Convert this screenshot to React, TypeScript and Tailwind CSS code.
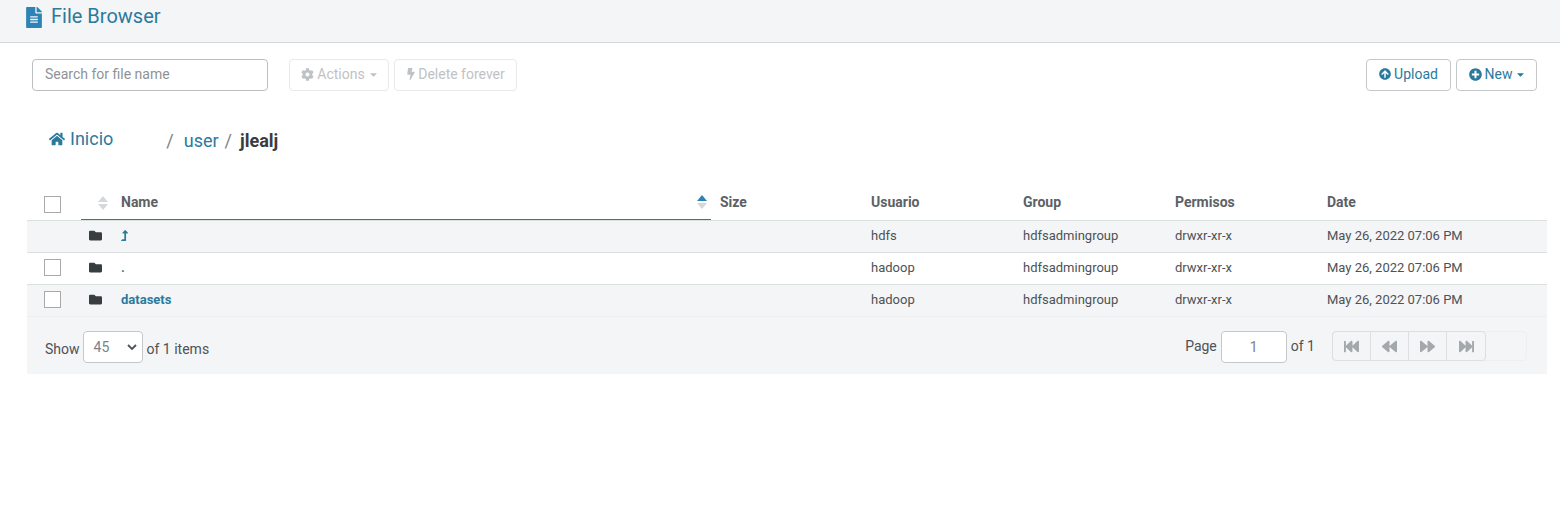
import { FaArrowCircleUp, FaBackward, FaBolt, FaCaretDown, FaCog, FaFastBackward, FaFastForward, FaFileAlt, FaFolder, FaForward, FaHome, FaLevelUpAlt, FaPlusCircle } from 'react-icons/fa';

const rows = [
  { name: 'up', user: 'hdfs', alt: true, check: false },
  { name: '.', user: 'hadoop', alt: false, check: true },
  { name: 'datasets', user: 'hadoop', alt: true, check: true },
];

function Checkbox() {
  return <div className="w-[17px] h-[17px] border border-[#a9a9a9] bg-white" />;
}

function SortIcon({ up, down, className }: { up: string; down: string; className: string }) {
  return (
    <svg width="10" height="14" viewBox="0 0 10 14" className={className}>
      <path d="M5 0L10 6H0Z" fill={up} />
      <path d="M0 8H10L5 14Z" fill={down} />
    </svg>
  );
}

function PagerButton({ children, last }: { children: React.ReactNode; last?: boolean }) {
  return (
    <div className={`w-[38px] h-full flex items-center justify-center text-[#a3a8ab] text-[15px] ${last ? '' : 'border-r border-[#dcdfe0]'}`}>
      {children}
    </div>
  );
}

export default function App() {
  return (
    <div className="w-[1560px] h-[519px] bg-white overflow-hidden text-[14px] text-[#4d5256]" style={{ fontFamily: 'Roboto, sans-serif' }}>
      {/* Header */}
      <div className="h-[43px] bg-[#f4f5f6] border-b border-[#d6d8da] pl-[26px] flex items-start">
        <FaFileAlt className="text-[#2d83b5] w-[16px] h-[21px] mt-[7px]" />
        <span className="ml-[9px] mt-[3px] text-[20px] leading-[26px] text-[#2a7a9e]">File Browser</span>
      </div>

      {/* Toolbar */}
      <div className="mt-[16px] h-[32px] pl-[32px] pr-[23px] flex items-center">
        <div className="w-[236px] h-[32px] border border-[#bcbfc1] rounded-[4px] pl-[12px] pb-[2px] flex items-center text-[14px] text-[#8f9396]">
          Search for file name
        </div>
        <div className="ml-[21px] w-[100px] h-[32px] border border-[#e8e9ea] rounded-[4px] pb-[2px] flex items-center justify-center gap-[3px] text-[#bfc2c4] text-[14px]">
          <FaCog className="text-[13px]" />
          <span>Actions</span>
          <FaCaretDown className="text-[11px] -mr-[2px]" />
        </div>
        <div className="ml-[5px] w-[123px] h-[32px] border border-[#e8e9ea] rounded-[4px] pb-[2px] flex items-center justify-center gap-[2px] text-[#bfc2c4] text-[14px]">
          <FaBolt className="text-[12px] -ml-[1px]" />
          <span className="-ml-[1px]">Delete forever</span>
        </div>
        <div className="ml-auto w-[85px] h-[32px] border border-[#c5c8ca] rounded-[4px] pb-[2px] flex items-center justify-center gap-[3px] text-[#2a7a9e] text-[14px]">
          <FaArrowCircleUp className="text-[12px]" />
          <span>Upload</span>
        </div>
        <div className="ml-[5px] w-[81px] h-[32px] border border-[#c5c8ca] rounded-[4px] pb-[2px] flex items-center justify-center gap-[3px] text-[#2a7a9e] text-[14px]">
          <FaPlusCircle className="text-[13px]" />
          <span>New</span>
          <FaCaretDown className="text-[11px] -mr-[2px]" />
        </div>
      </div>

      {/* Breadcrumbs */}
      <div className="mt-[36px] h-[29px] pl-[49px] flex items-start text-[18px] leading-[24px]">
        <div className="flex items-center gap-[5px] text-[#2a7a9e]">
          <FaHome className="text-[16px]" />
          <span>Inicio</span>
        </div>
        <div className="mt-[2px] ml-[53px] flex items-center">
          <span className="text-[#7c8286]">/</span>
          <span className="ml-[10px] text-[#2a7a9e]">user</span>
          <span className="ml-[6px] text-[#7c8286]">/</span>
          <span className="ml-[8px] font-bold text-[#383d40]">jlealj</span>
        </div>
      </div>

      {/* Table */}
      <div className="mt-[30px] mx-[27px] w-[1520px]">
        <div className="h-[35px] flex border-b border-[#dcdfe0] font-bold text-[#5c6165]">
          <div className="w-[54px] pl-[17px] pt-[10px]"><Checkbox /></div>
          <div className="w-[630px] h-[34px] flex relative">
            <div className="w-[32px] relative">
              <SortIcon up="#d5d8da" down="#d5d8da" className="absolute left-[17px] top-[10px]" />
            </div>
            <span className="pl-[8px] pt-[6px]">Name</span>
            <SortIcon up="#2d83b5" down="#d5d8da" className="absolute left-[616px] top-[9px]" />
            <div className="absolute left-0 right-0 bottom-0 h-px bg-[#1f7fb0]" />
          </div>
          <div className="w-[152px] pl-[9px] pt-[6px]">Size</div>
          <div className="w-[152px] pl-[8px] pt-[6px]">Usuario</div>
          <div className="w-[152px] pl-[8px] pt-[6px]">Group</div>
          <div className="w-[152px] pl-[8px] pt-[6px]">Permisos</div>
          <div className="flex-1 pl-[8px] pt-[6px]">Date</div>
        </div>
        {rows.map((row, i) => (
          <div key={row.name} className={`h-[32px] pb-[2px] flex items-center border-b text-[13px] ${i === 2 ? 'border-[#eceeef]' : 'border-[#dcdfe0]'} ${row.alt ? 'bg-[#f4f5f6]' : 'bg-white'}`}>
            <div className="w-[54px] pl-[17px]">{row.check && <Checkbox />}</div>
            <div className="w-[32px] pl-[8px] text-[#383d40] text-[13px]"><FaFolder /></div>
            <div className="w-[598px] pl-[8px] text-[#2a7a9e] font-bold">
              {row.name === 'up' ? <FaLevelUpAlt className="text-[11px] -ml-[2px]" /> : row.name}
            </div>
            <div className="w-[152px]" />
            <div className="w-[152px] pl-[8px]">{row.user}</div>
            <div className="w-[152px] pl-[8px]">hdfsadmingroup</div>
            <div className="w-[152px] pl-[8px]">drwxr-xr-x</div>
            <div className="flex-1 pl-[8px]">May 26, 2022 07:06 PM</div>
          </div>
        ))}

        {/* Footer */}
        <div className="h-[57px] bg-[#f4f5f6] flex items-start pt-[14px] pl-[18px] pr-[20px] text-[14px]">
          <span className="mt-[8px]">Show</span>
          <div className="ml-[3px] w-[60px] h-[32px] bg-white border border-[#c5c8ca] rounded-[4px] pl-[10px] pr-[5px] flex items-center justify-between text-[#7c8286]">
            <span>45</span>
            <svg width="10" height="6" viewBox="0 0 10 6" fill="none" stroke="#4d5256" strokeWidth="1.8"><path d="M1 1l4 4 4-4" /></svg>
          </div>
          <span className="ml-[4px] mt-[8px]">of 1 items</span>
          <span className="ml-auto mt-[5px]">Page</span>
          <div className="ml-[4px] w-[66px] h-[32px] bg-white border border-[#c5c8ca] rounded-[4px] flex items-center justify-center text-[#7c8286]">1</div>
          <span className="ml-[4px] mt-[5px]">of 1</span>
          <div className="ml-[17px] w-[195px] h-[30px] rounded-[4px] border border-[#eeeff0] flex">
            <div className="h-full w-[152px] -ml-px -mt-px box-content border border-[#dcdfe0] rounded-[4px] flex">
              <PagerButton><FaFastBackward /></PagerButton>
              <PagerButton><FaBackward /></PagerButton>
              <PagerButton><FaForward /></PagerButton>
              <PagerButton last><FaFastForward /></PagerButton>
            </div>
          </div>
        </div>
      </div>
    </div>
  );
}
